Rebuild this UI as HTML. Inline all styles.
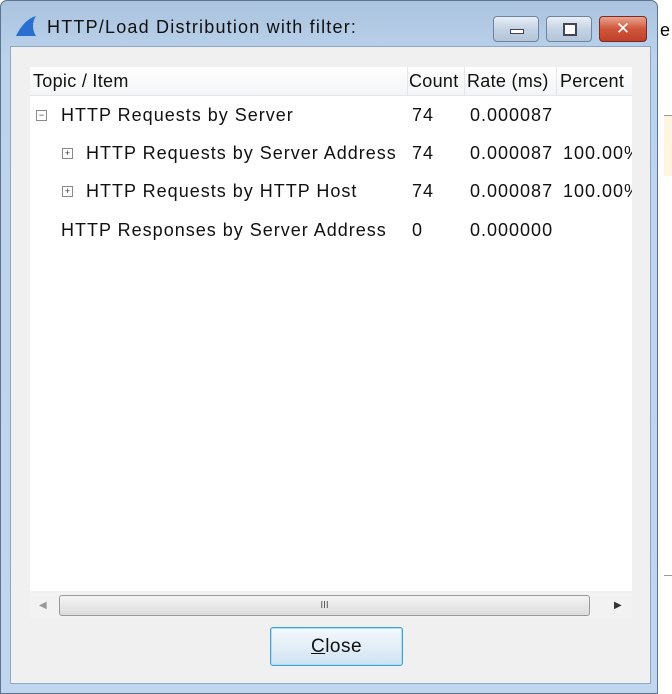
<!DOCTYPE html>
<html><head><style>
body{margin:0;width:672px;height:694px;overflow:hidden;background:#fff;font-family:"Liberation Sans","DejaVu Sans",sans-serif;position:relative}
.abs{position:absolute}
.frame{left:0;top:0;width:658px;height:694px;background:linear-gradient(#aac3de,#bcd3ec 60px,#c0d6ee);border:1px solid #5d7390;border-radius:7px 7px 0 0;box-sizing:border-box}
.client{left:10px;top:46px;width:641px;height:638px;background:#f0f0f0;border:1px solid #8ea6c2;box-sizing:border-box}
.title{left:47px;top:17px;font-size:18px;color:#111;letter-spacing:1.2px}
.btn{top:16px;height:26px;border:1px solid #6f839c;border-radius:4px;background:linear-gradient(#e8eef6,#c5d3e4 50%,#b3c5da);box-sizing:border-box}
.list{left:30px;top:67px;width:602px;height:524px;background:#fff}
.hdr{left:30px;top:67px;width:602px;height:28px;background:linear-gradient(#fff,#f3f4f6);border-bottom:1px solid #e3e6ea;font-size:18px;color:#111;overflow:hidden}
.row{font-size:18px;color:#111;position:absolute;white-space:nowrap;letter-spacing:1px}
.hdr .row{letter-spacing:0.3px}
.box{position:absolute;width:9px;height:9px;border:1px solid #8a8a8a;font-size:9px;line-height:9px;text-align:center;color:#333;background:#fff;letter-spacing:0}
</style></head><body>
<div class="abs" style="left:658px;top:0;width:14px;height:694px;background:#fff"></div>
<div class="abs" style="left:660px;top:20px;font-size:18px">e</div>
<div class="abs" style="left:664px;top:115px;width:8px;height:60px;background:#fdf5e0;border-top:1px solid #999"></div>
<div class="abs" style="left:664px;top:575px;width:8px;height:1px;background:#999"></div>
<div class="abs frame"></div>
<svg class="abs" style="left:14px;top:14px" width="24" height="24"><path d="M2 22 C6 14 12 5 22 2 C18 8 18 16 22 22 Z" fill="#2a6fd0"/></svg>
<div class="abs title">HTTP/Load Distribution with filter:</div>
<div class="abs btn" style="left:493px;width:46px"><div class="abs" style="left:16px;top:12px;width:12px;height:3px;background:#fff;border:1px solid #445"></div></div>
<div class="abs btn" style="left:546px;width:46px"><div class="abs" style="left:16px;top:6px;width:10px;height:9px;border:2px solid #445;background:#fff"></div></div>
<div class="abs btn" style="left:599px;width:48px;background:linear-gradient(#e9a48f,#d0563b 50%,#c1402a);border-color:#7a2a20;color:#fff;font-weight:bold;text-align:center;font-size:17px;line-height:24px">✕</div>
<div class="abs client"></div>
<div class="abs list"></div>
<div class="abs hdr">
<span class="row" style="left:3px;top:4px">Topic / Item</span>
<div class="abs" style="left:377px;top:0;width:1px;height:28px;background:#e3e6ea"></div>
<span class="row" style="left:379px;top:4px">Count</span>
<div class="abs" style="left:434px;top:0;width:1px;height:28px;background:#e3e6ea"></div>
<span class="row" style="left:437px;top:4px">Rate (ms)</span>
<div class="abs" style="left:526px;top:0;width:1px;height:28px;background:#e3e6ea"></div>
<span class="row" style="left:530px;top:4px">Percent</span>
</div>
<div class="abs" style="left:30px;top:95px;width:602px;height:160px;overflow:hidden">
<div class="box" style="left:6px;top:15px">−</div>
<span class="row" style="left:31px;top:10px">HTTP Requests by Server</span>
<span class="row" style="left:382px;top:10px">74</span><span class="row" style="left:440px;top:10px">0.000087</span>
<div class="box" style="left:32px;top:53px">+</div>
<span class="row" style="left:56px;top:48px">HTTP Requests by Server Address</span>
<span class="row" style="left:382px;top:48px">74</span><span class="row" style="left:440px;top:48px">0.000087</span><span class="row" style="left:533px;top:48px">100.00%</span>
<div class="box" style="left:32px;top:91px">+</div>
<span class="row" style="left:56px;top:86px">HTTP Requests by HTTP Host</span>
<span class="row" style="left:382px;top:86px">74</span><span class="row" style="left:440px;top:86px">0.000087</span><span class="row" style="left:533px;top:86px">100.00%</span>
<span class="row" style="left:31px;top:125px">HTTP Responses by Server Address</span>
<span class="row" style="left:382px;top:125px">0</span><span class="row" style="left:440px;top:125px">0.000000</span>
</div>
<div class="abs" style="left:30px;top:593px;width:602px;height:26px;background:#f2f2f2"></div>
<div class="abs" style="left:39px;top:600px;font-size:10px;color:#999">◀</div>
<div class="abs" style="left:614px;top:600px;font-size:10px;color:#333">▶</div>
<div class="abs" style="left:59px;top:595px;width:531px;height:21px;border:1px solid #999;border-radius:3px;background:linear-gradient(#f4f4f4,#dcdcdc);box-sizing:border-box;text-align:center;font-size:10px;line-height:19px;color:#555">III</div>
<div class="abs" style="left:270px;top:627px;width:133px;height:39px;border:1px solid #3c9fd8;border-radius:3px;box-sizing:border-box;background:linear-gradient(#f3f9fd,#e3eef7 50%,#cfe2f2);box-shadow:inset 0 0 0 1px #aee0f8;text-align:center;font-size:19px;line-height:37px;color:#111;letter-spacing:0.5px"><u>C</u>lose</div>
</body></html>
